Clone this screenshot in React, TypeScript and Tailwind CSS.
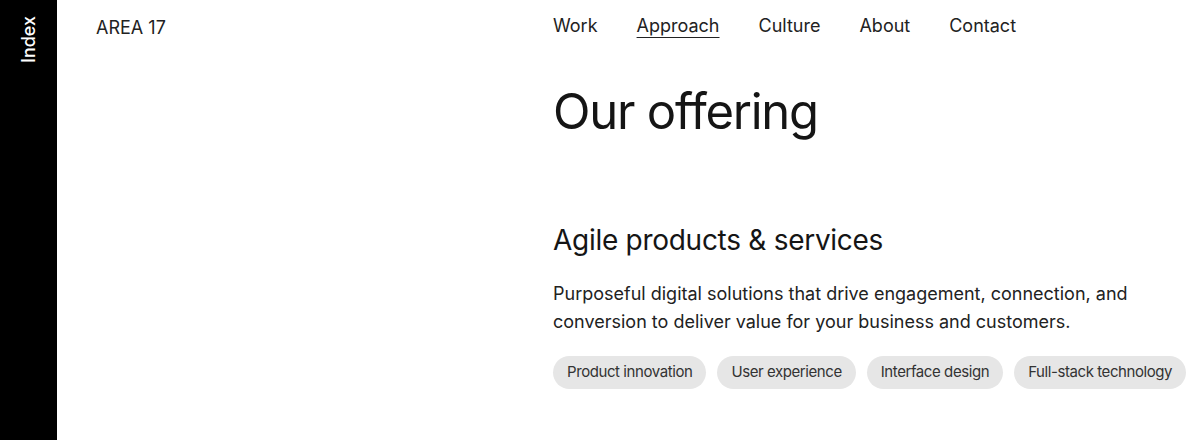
export default function App() {
  const tags = ["Product innovation", "User experience", "Interface design", "Full-stack technology"];
  const nav = ["Work", "Approach", "Culture", "About", "Contact"];

  return (
    <div className="flex h-[440px] w-[1200px] overflow-hidden bg-white text-[#151515] font-['Inter',sans-serif]">
      {/* side tab */}
      <div className="w-[57px] flex-shrink-0 bg-black flex justify-center pt-[14px]">
        <span className="text-white text-[18px] font-medium leading-none [writing-mode:vertical-rl] rotate-180 h-[49px]">Index</span>
      </div>

      <div className="flex-1 grid grid-cols-[496px_1fr]">
        <div className="pl-[39px] pt-[14px]">
          <span className="text-[18px] text-[#222]">AREA 17</span>
        </div>

        <div className="pt-[12px]">
          <nav className="flex gap-[39px] text-[18px] text-[#222]">
            {nav.map((n) => (
              <a key={n} className={n === "Approach" ? "underline underline-offset-[5px] decoration-1" : ""}>
                {n}
              </a>
            ))}
          </nav>

          <h1 className="mt-[48px] text-[49px] leading-none tracking-[-0.025em]">Our offering</h1>

          <h2 className="mt-[90px] text-[28px] leading-none tracking-[-0.01em]">Agile products &amp; services</h2>

          <p className="mt-[26px] text-[18px] leading-[28px] text-[#222] w-[620px]">
            Purposeful digital solutions that drive engagement, connection, and conversion to deliver value for your business and customers.
          </p>

          <div className="mt-[20px] flex gap-[11px]">
            {tags.map((t) => (
              <span key={t} className="h-[33px] px-[14px] rounded-full bg-[#e6e6e6] text-[15px] tracking-[-0.028em] text-[#333] flex items-center">
                {t}
              </span>
            ))}
          </div>
        </div>
      </div>
    </div>
  );
}
